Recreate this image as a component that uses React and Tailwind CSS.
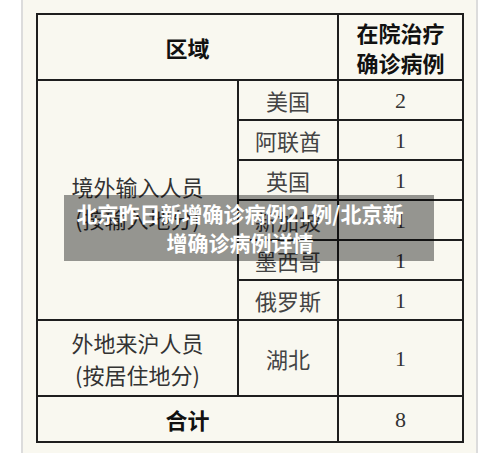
import React from "react";

const cjk = { fontFamily: '"Noto Sans CJK SC", "Noto Sans", sans-serif' };
const serif = { fontFamily: '"Liberation Serif", "Noto Sans CJK SC", serif' };

const countries = [
  { name: "美国", count: 2 },
  { name: "阿联酋", count: 1 },
  { name: "英国", count: 1 },
  { name: "新加坡", count: 1 },
  { name: "墨西哥", count: 1 },
  { name: "俄罗斯", count: 1 },
];

const Cell = ({ className = "", children }) => (
  <div className={`bg-[#f9f8f0] flex items-center justify-center text-center ${className}`}>
    {children}
  </div>
);

const App = () => {
  return (
    <div className="relative w-[500px] h-[453px] bg-white overflow-hidden" style={cjk}>
      {/* page panel */}
      <div className="ml-[21px] w-[457px] h-full bg-[#f9f8f0] border-x-2 border-[#dcdcdc] pt-[13px] pl-[13px]">
        <div className="grid grid-cols-[199px_98px_123px] grid-rows-[64px_repeat(6,38px)_74px_44px] gap-[2px] p-[2px] bg-[#1e1e1e] w-[428px]">
          {/* header */}
          <Cell className="col-span-2 text-[22px] font-bold text-[#111]">区域</Cell>
          <Cell className="text-[22px] font-bold text-[#111] leading-[30px]">
            在院治疗
            <br />
            确诊病例
          </Cell>

          {/* imported cases */}
          <Cell className="row-span-6 text-[22px] text-[#333] leading-[32px] pt-[4px]">
            境外输入人员
            <br />
            (按输入地分)
          </Cell>
          {countries.map((c) => (
            <React.Fragment key={c.name}>
              <Cell className="text-[22px] text-[#444]">{c.name}</Cell>
              <Cell className="text-[22px] text-[#333]">
                <span style={serif}>{c.count}</span>
              </Cell>
            </React.Fragment>
          ))}

          {/* domestic */}
          <Cell className="text-[22px] text-[#333] leading-[32px]">
            外地来沪人员
            <br />
            (按居住地分)
          </Cell>
          <Cell className="text-[22px] text-[#444]">湖北</Cell>
          <Cell className="text-[22px] text-[#333]">
            <span style={serif}>1</span>
          </Cell>

          {/* total */}
          <Cell className="col-span-2 text-[22px] font-bold text-[#111]">合计</Cell>
          <Cell className="text-[22px] text-[#333]">
            <span style={serif}>8</span>
          </Cell>
        </div>
      </div>

      {/* title overlay */}
      <div className="absolute left-[64px] top-[195px] w-[370px] h-[66px] bg-black/40 pt-[4px]">
        <div className="ml-[10px] w-[332px] text-center text-white font-bold text-[21px] leading-[29px]">
          北京昨日新增确诊病例21例/北京新增确诊病例详情
        </div>
      </div>
    </div>
  );
};

export default App;
